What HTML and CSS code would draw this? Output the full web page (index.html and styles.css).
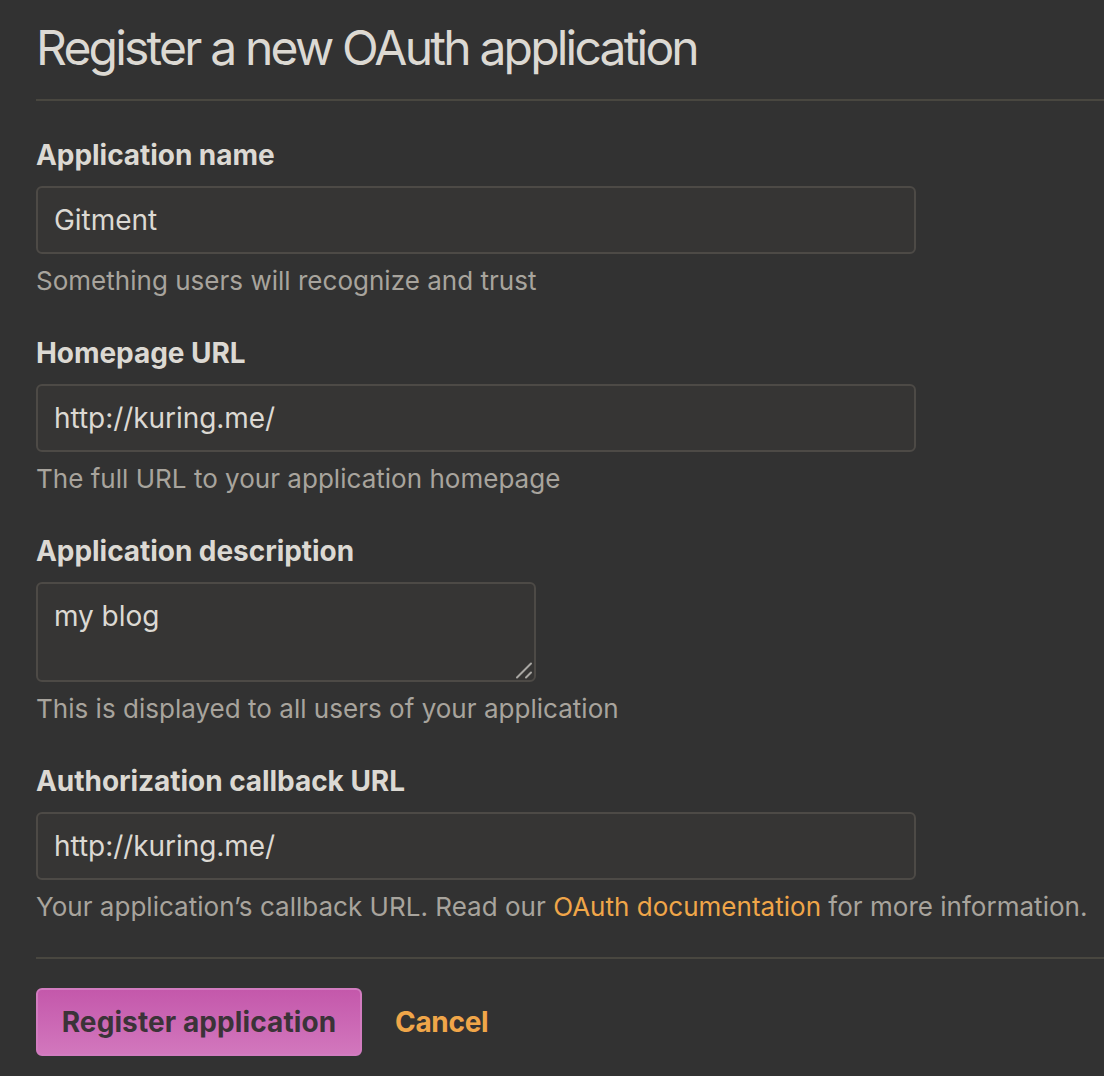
FILE: index.html
```html
<!DOCTYPE html>
<html lang="en">
<head>
<meta charset="utf-8">
<title>Register a new OAuth application</title>
<link rel="stylesheet" href="styles.css">
</head>
<body>
<main class="page">
  <h1 class="title">Register a new OAuth application</h1>
  <form class="form">
    <div class="group">
      <label class="label" for="name">Application name</label>
      <input class="field" id="name" type="text" value="Gitment">
      <p class="note">Something users will recognize and trust</p>
    </div>
    <div class="group">
      <label class="label" for="home">Homepage URL</label>
      <input class="field" id="home" type="text" value="http://kuring.me/">
      <p class="note">The full URL to your application homepage</p>
    </div>
    <div class="group">
      <label class="label" for="desc">Application description</label>
      <div class="area-wrap">
        <textarea class="field area" id="desc">my blog</textarea>
        <svg class="grip" width="18" height="18" viewBox="0 0 18 18" aria-hidden="true">
          <path d="M2 16.5 L16 2.5 M11 16.5 L16 11.5" stroke="#a9a7a3" stroke-width="2" stroke-linecap="round" fill="none"/>
        </svg>
      </div>
      <p class="note">This is displayed to all users of your application</p>
    </div>
    <div class="group">
      <label class="label" for="cb">Authorization callback URL</label>
      <input class="field" id="cb" type="text" value="http://kuring.me/">
      <p class="note">Your application’s callback URL. Read our <a class="link" href="#">OAuth documentation</a> for more information.</p>
    </div>
    <div class="actions">
      <button class="btn" type="button">Register application</button>
      <a class="cancel" href="#">Cancel</a>
    </div>
  </form>
</main>
</body>
</html>
```
FILE: styles.css
```css
html, body {
  margin: 0;
  padding: 0;
  background: #323232;
}
body {
  font-family: Inter, "Liberation Sans", sans-serif;
  color: #dcd9d3;
  overflow: hidden;
}
.page {
  padding-left: 36px;
}
.title {
  margin: 0;
  padding-top: 18px;
  font-size: 48px;
  font-weight: 400;
  line-height: 60px;
  letter-spacing: -2.8px;
  color: #dcd9d3;
  padding-bottom: 21px;
  border-bottom: 2px solid #494740;
}
.form {
  margin: 0;
}
.group {
  padding-top: 34px;
  display: flex;
  flex-direction: column;
  align-items: flex-start;
}
.label {
  font-size: 28px;
  font-weight: 700;
  line-height: 40px;
  letter-spacing: -0.05px;
  margin-bottom: 11px;
}
.field {
  box-sizing: border-box;
  width: 880px;
  height: 68px;
  margin: 0;
  padding: 0 16px;
  font-family: inherit;
  font-size: 28px;
  letter-spacing: -0.05px;
  color: #dcd9d3;
  background: #363534;
  border: 2px solid #4d4a46;
  border-radius: 6px;
  outline: none;
}
.area-wrap {
  position: relative;
  width: 500px;
  height: 100px;
}
.area {
  width: 500px;
  height: 100px;
  padding: 12px 16px;
  line-height: 40px;
  resize: none;
  display: block;
}
.grip {
  position: absolute;
  right: 3px;
  bottom: 3px;
}
.note {
  margin: 9px 0 0;
  font-size: 26px;
  line-height: 36px;
  letter-spacing: 0.02px;
  color: #a8a49d;
}
.link {
  color: #f0a649;
  text-decoration: none;
}
.actions {
  margin-top: 32px;
  border-top: 2px solid #494740;
  padding-top: 29px;
  display: flex;
  align-items: center;
  gap: 33px;
}
.btn {
  box-sizing: border-box;
  height: 68px;
  width: 326px;
  padding: 0;
  font-family: inherit;
  font-size: 28px;
  font-weight: 700;
  letter-spacing: 0.1px;
  color: #3b3338;
  background: linear-gradient(#c458ab, #d277bd);
  border: 2px solid #d27cc0;
  border-radius: 6px;
}
.cancel {
  font-size: 28px;
  font-weight: 700;
  color: #f0a649;
  text-decoration: none;
  letter-spacing: -0.3px;
}
```
